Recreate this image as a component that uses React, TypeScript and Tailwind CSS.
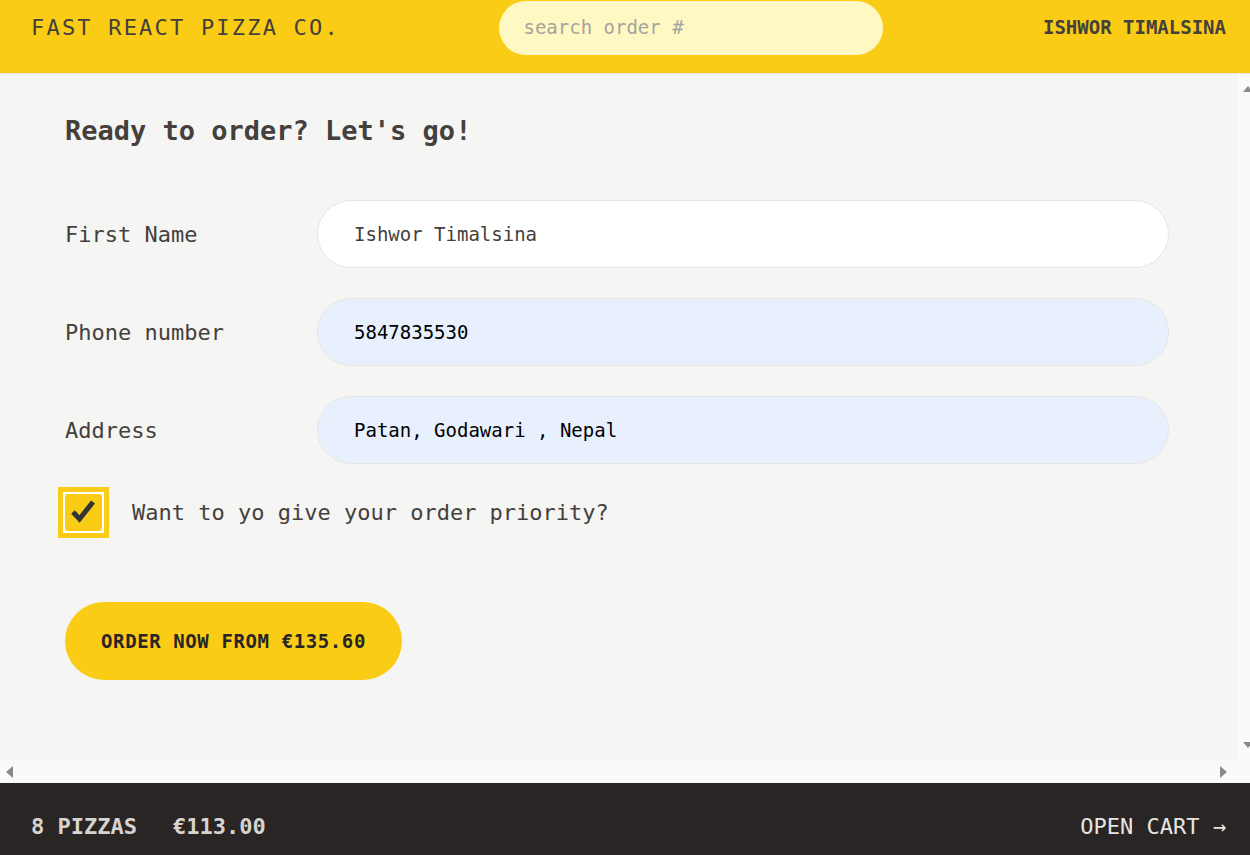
import React from "react";

const mono = "font-['DejaVu_Sans_Mono','Liberation_Mono',monospace]";

function Field({ label, value, filled }: { label: string; value: string; filled?: boolean }) {
  return (
    <div className="flex items-center">
      <label className="w-[252px] shrink-0 text-[22px] text-[#44403c]">{label}</label>
      <input
        readOnly
        defaultValue={value}
        className={
          "h-[68px] w-[852px] rounded-full border border-[#e7e5e4] px-[36px] text-[19px] outline-none " +
          (filled ? "bg-[#e8f0fe] text-black" : "bg-white text-[#44403c]")
        }
      />
    </div>
  );
}

export default function App() {
  return (
    <div className={`flex h-[855px] w-[1250px] flex-col overflow-hidden bg-[#f5f5f4] ${mono}`}>
      <header className="flex h-[74px] shrink-0 items-center justify-between border-b border-[#e7e5e4] bg-[#facc15] pb-[18px] pl-[31px] pr-[24px]">
        <span className="text-[22px] tracking-[2.2px] text-[#44403c]">FAST REACT PIZZA CO.</span>
        <div className="flex h-[54px] w-[384px] items-center rounded-full bg-[#fef9c3] px-[24px]">
          <span className="text-[19px] text-[#a8a29e]">search order #</span>
        </div>
        <span className="text-[19px] font-bold text-[#44403c]">ISHWOR TIMALSINA</span>
      </header>

      <div className="flex min-h-0 flex-1">
        <main className="flex-1 pl-[65px] pt-[39px]">
          <h2 className="h-[36px] text-[27px] font-bold leading-[36px] text-[#44403c]">Ready to order? Let's go!</h2>
          <form className="mt-[51px] flex flex-col gap-[30px]">
            <Field label="First Name" value="Ishwor Timalsina" />
            <Field label="Phone number" value="5847835530" filled />
            <Field label="Address" value="Patan, Godawari , Nepal" filled />
          </form>
          <div className="mt-[23px] flex items-center gap-[23px]">
            <div className="-ml-[7px] border-[5px] border-[#facc15] bg-white p-[2px]">
              <div className="flex h-[37px] w-[37px] items-center justify-center rounded-[3px] bg-[#facc15]">
                <svg width="37" height="37" viewBox="0 0 37 37" fill="none" stroke="#333" strokeWidth="5" strokeLinecap="butt" strokeLinejoin="miter">
                  <path d="M8 18 L14.5 25 L28 8" />
                </svg>
              </div>
            </div>
            <span className="text-[22px] text-[#44403c]">Want to yo give your order priority?</span>
          </div>
          <button className="mt-[64px] flex h-[78px] w-[337px] items-center justify-center rounded-full bg-[#facc15] text-[19px] font-bold tracking-[0.6px] text-[#292524]">
            ORDER NOW FROM €135.60
          </button>
        </main>
        <div className="flex w-[12px] shrink-0 flex-col justify-between bg-[#fafafa] py-[12px] pl-[5px]">
          <div className="h-0 w-0 border-b-[6px] border-l-[5px] border-r-[5px] border-b-[#8a8a8a] border-l-transparent border-r-transparent" />
          <div className="h-0 w-0 border-t-[6px] border-l-[5px] border-r-[5px] border-t-[#8a8a8a] border-l-transparent border-r-transparent" />
        </div>
      </div>

      <div className="flex h-[23px] shrink-0 items-center justify-between bg-[#fafafa] pl-[6px] pr-[23px]">
        <div className="h-0 w-0 border-r-[7px] border-t-[6px] border-b-[6px] border-r-[#8a8a8a] border-t-transparent border-b-transparent" />
        <div className="h-0 w-0 border-l-[7px] border-t-[6px] border-b-[6px] border-l-[#8a8a8a] border-t-transparent border-b-transparent" />
      </div>

      <footer className="flex h-[72px] shrink-0 items-center justify-between bg-[#292524] pl-[31px] pr-[24px] pt-[14px] text-[22px] uppercase text-[#e7e5e4]">
        <p className="flex gap-[36px] font-bold text-[#d6d3d1]">
          <span>8 pizzas</span>
          <span>€113.00</span>
        </p>
        <span>Open cart →</span>
      </footer>
    </div>
  );
}
